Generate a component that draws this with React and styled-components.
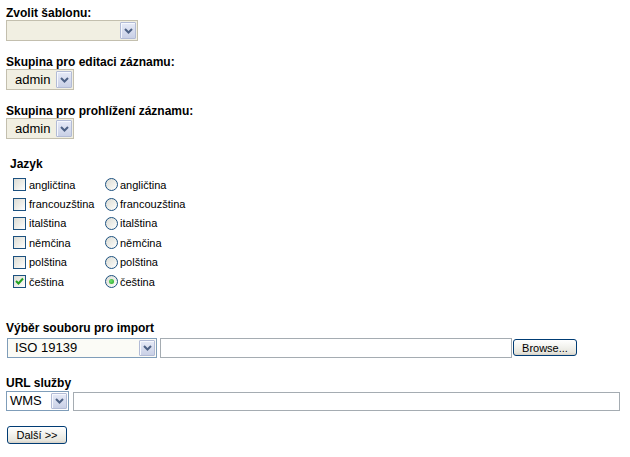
import React from "react";
import styled, { createGlobalStyle } from "styled-components";

const Global = createGlobalStyle`
  html, body { margin: 0; padding: 0; background: #fff; }
  body { font-family: "Liberation Sans", Arial, sans-serif; color: #000; }
`;

const Page = styled.form`
  padding: 6px 0 0 6px;
  display: flex;
  flex-direction: column;
`;

const Block = styled.div`
  display: flex;
  flex-direction: column;
  margin-bottom: ${(p) => p.$mb || 0}px;
  padding-left: ${(p) => p.$pl || 0}px;
`;

const Label = styled.div`
  font-size: 12px;
  font-weight: bold;
  line-height: 14px;
  height: 14px;
  padding-left: ${(p) => p.$pl || 0}px;
  margin-bottom: ${(p) => p.$mb || 0}px;
`;

const SelectFrame = styled.div`
  box-sizing: border-box;
  display: flex;
  align-items: center;
  width: ${(p) => p.$w}px;
  height: ${(p) => p.$h || 21}px;
  margin-left: ${(p) => p.$ml || 0}px;
  border: 1px solid ${(p) => p.$border || "#c3bfae"};
  background: ${(p) => p.$bg || "#f1efe2"};
  padding: 1px;
  flex-shrink: 0;
`;

const SelectValue = styled.span`
  flex: 1;
  font-size: 13px;
  line-height: 16px;
  padding-left: ${(p) => p.$pl || 2}px;
  white-space: nowrap;
  overflow: hidden;
`;

const ArrowBtn = styled.span`
  box-sizing: border-box;
  width: 16px;
  height: 100%;
  display: flex;
  align-items: center;
  justify-content: center;
  border: 1px solid #b2bbd6;
  border-radius: 1px;
  background: linear-gradient(#e6eaf7, #c9d0e6);
  box-shadow: inset 1px 1px 0 #f6f8fd;
`;

const Chevron = () => (
  <svg width="9" height="6" viewBox="0 0 9 6">
    <path d="M1 1 L4.5 4.5 L8 1" fill="none" stroke="#4d6185" strokeWidth="2" />
  </svg>
);

const Select = ({ value, ...p }) => (
  <SelectFrame {...p}>
    <SelectValue $pl={p.$pl}>{value}</SelectValue>
    <ArrowBtn>
      <Chevron />
    </ArrowBtn>
  </SelectFrame>
);

const Legend = styled.div`
  font-size: 12px;
  font-weight: bold;
  line-height: 14px;
  padding-left: 4px;
  margin-bottom: 4px;
`;

const OptGrid = styled.div`
  display: grid;
  grid-template-columns: 92px auto;
  grid-auto-rows: 19.4px;
  padding-left: 7px;
`;

const Opt = styled.label`
  display: flex;
  align-items: center;
  gap: ${(p) => p.$gap || 3}px;
  font-size: 11px;
  white-space: nowrap;
`;

const Box = styled.span`
  box-sizing: border-box;
  width: 13px;
  height: 13px;
  border: 1px solid #1c5180;
  background: linear-gradient(135deg, #dcdcd5 0%, #eeeee9 55%, #ffffff 100%);
  display: flex;
  align-items: center;
  justify-content: center;
`;

const Circle = styled.span`
  box-sizing: border-box;
  width: 13px;
  height: 13px;
  border-radius: 50%;
  border: 1px solid #1c5180;
  background: linear-gradient(135deg, #dcdcd5 0%, #eeeee9 55%, #ffffff 100%);
  display: flex;
  align-items: center;
  justify-content: center;
`;

const Dot = styled.span`
  width: 5px;
  height: 5px;
  border-radius: 50%;
  background: radial-gradient(circle at 40% 40%, #6fe06f, #21a121);
`;

const Check = () => (
  <svg width="9" height="9" viewBox="0 0 9 9">
    <path d="M1 4 L3.5 6.5 L8 1.5" fill="none" stroke="#21a121" strokeWidth="2" />
  </svg>
);

const Row = styled.div`
  display: flex;
  align-items: ${(p) => p.$align || "flex-start"};
  gap: ${(p) => p.$gap || 3}px;
  margin-left: ${(p) => p.$ml || 0}px;
`;

const TextInput = styled.input`
  box-sizing: border-box;
  width: ${(p) => p.$w}px;
  height: ${(p) => p.$h || 20}px;
  border: 1px solid #a5acb2;
  background: #fff;
  margin: ${(p) => p.$mt || 0}px 0 0 0;
  padding: 0 2px;
  font: 12px "Liberation Sans", Arial, sans-serif;
  outline: none;
`;

const Button = styled.button`
  box-sizing: border-box;
  width: ${(p) => p.$w}px;
  height: ${(p) => p.$h || 18}px;
  margin: ${(p) => p.$mt || 0}px 0 0 ${(p) => p.$ml || 0}px;
  border: 1px solid #003c74;
  border-radius: 3px;
  background: linear-gradient(#ffffff 0%, #f4f4f0 40%, #e6e5dd 85%, #d6d0c5 100%);
  font: 11px "Liberation Sans", Arial, sans-serif;
  color: #000;
  padding: 0;
  line-height: 14px;
  cursor: default;
`;

const languages = ["angličtina", "francouzština", "italština", "němčina", "polština", "čeština"];

export default function App() {
  return (
    <>
      <Global />
      <Page>
        <Block $mb={14}>
          <Label>Zvolit šablonu:</Label>
          <Select value="" $w={132} />
        </Block>
        <Block $mb={14}>
          <Label>Skupina pro editaci záznamu:</Label>
          <Select value="admin" $w={68} $pl={7} />
        </Block>
        <Block $mb={18}>
          <Label>Skupina pro prohlížení záznamu:</Label>
          <Select value="admin" $w={68} $pl={7} />
        </Block>

        <Block $mb={30}>
          <Legend>Jazyk</Legend>
          <OptGrid>
            {languages.map((l, i) => (
              <React.Fragment key={l}>
                <Opt>
                  <Box>{i === 5 && <Check />}</Box>
                  {l}
                </Opt>
                <Opt $gap={2}>
                  <Circle>{i === 5 && <Dot />}</Circle>
                  {l}
                </Opt>
              </React.Fragment>
            ))}
          </OptGrid>
        </Block>

        <Block $mb={18}>
          <Label $mb={3}>Výběr souboru pro import</Label>
          <Row $ml={1} $gap={3}>
            <Select value="ISO 19139" $w={150} $h={20} $border="#7f9db9" $bg="#fbfbf6" $pl={6} />
            <TextInput $w={352} />
            <Button type="button" $w={64} $h={17} $mt={1} $ml={-2}>Browse...</Button>
          </Row>
        </Block>

        <Block $mb={15}>
          <Label $mb={1}>URL služby</Label>
          <Row $gap={4}>
            <Select value="WMS" $w={63} $h={20} $border="#7f9db9" $bg="#ffffff" $pl={2} />
            <TextInput $w={547} $h={19} $mt={1} />
          </Row>
        </Block>

        <Row $ml={1}>
          <Button type="button" $w={60}>Další &gt;&gt;</Button>
        </Row>
      </Page>
    </>
  );
}
